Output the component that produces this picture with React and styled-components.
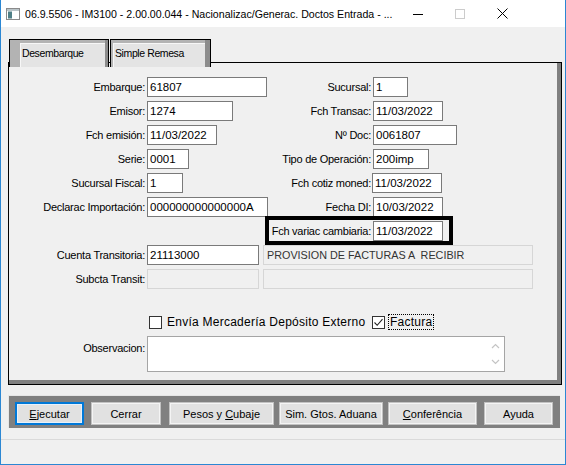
import styled, { createGlobalStyle } from 'styled-components'

const GlobalStyle = createGlobalStyle`
  html, body { margin: 0; padding: 0; background: #fff; }
  body { font-family: "Liberation Sans", Arial, sans-serif; color: #000; }
  * { box-sizing: border-box; }
`

const leftRows = [
  { label: 'Embarque:', value: '61807', w: 120 },
  { label: 'Emisor:', value: '1274', w: 86 },
  { label: 'Fch emisión:', value: '11/03/2022', w: 70 },
  { label: 'Serie:', value: '0001', w: 42 },
  { label: 'Sucursal Fiscal:', value: '1', w: 36 },
  { label: 'Declarac Importación:', value: '000000000000000A', w: 121 },
]

const rightRows = [
  { label: 'Sucursal:', value: '1', w: 35 },
  { label: 'Fch Transac:', value: '11/03/2022', w: 70 },
  { label: 'Nº Doc:', value: '0061807', w: 84 },
  { label: 'Tipo de Operación:', value: '200imp', w: 56 },
  { label: 'Fch cotiz moned:', value: '11/03/2022', w: 70, shift: -1 },
  { label: 'Fecha DI:', value: '10/03/2022', w: 70 },
  { label: 'Fch variac cambiaria:', value: '11/03/2022', w: 70 },
]

const buttons = [
  { text: 'Ejecutar', key: 'E', w: 69, ml: 0, focus: true },
  { text: 'Cerrar', w: 70, ml: 7 },
  { text: 'Pesos y Cubaje', key: 'C', w: 105, ml: 8 },
  { text: 'Sim. Gtos. Aduana', w: 104, ml: 5 },
  { text: 'Conferência', key: 'C', w: 89, ml: 5 },
  { text: 'Ayuda', w: 69, ml: 7 },
]

// underline the access key letter, like a windows caption
const Mnemonic = ({ text, k }) => {
  if (!k) return <span>{text}</span>
  const i = text.indexOf(k)
  return (
    <span>
      {text.slice(0, i)}
      <u>{text[i]}</u>
      {text.slice(i + 1)}
    </span>
  )
}

const App = () => {
  return (
    <>
      <GlobalStyle />
      <Window>
        <TitleBar>
          <svg width="14" height="12" viewBox="0 0 14 12">
            <rect x="0.5" y="0.5" width="13" height="11" fill="#fff" stroke="#8a8a8a" />
            <rect x="1" y="1" width="12" height="2" fill="#b9c4c8" />
            <rect x="2" y="3.5" width="4" height="7" fill="#4f7f86" />
          </svg>
          <Title>06.9.5506 - IM3100 - 2.00.00.044 - Nacionalizac/Generac. Doctos Entrada - ...</Title>
          <Controls>
            <Ctrl>
              <svg width="10" height="10" viewBox="0 0 10 10">
                <line x1="0" y1="5.5" x2="10" y2="5.5" stroke="#000" strokeWidth="1" />
              </svg>
            </Ctrl>
            <Ctrl>
              <svg width="10" height="10" viewBox="0 0 10 10">
                <rect x="0.5" y="0.5" width="9" height="9" fill="none" stroke="#cccccc" />
              </svg>
            </Ctrl>
            <Ctrl>
              <svg width="11" height="11" viewBox="0 0 11 11">
                <path d="M0.5 0.5 L10.5 10.5 M10.5 0.5 L0.5 10.5" stroke="#000" strokeWidth="1" />
              </svg>
            </Ctrl>
          </Controls>
        </TitleBar>

        <Body>
          <TabRow>
            <Tab $w={100} $pl={10} $pr={3}>
              <TabFace>Desembarque</TabFace>
            </Tab>
            <Tab $w={101} $pl={2} $pr={5}>
              <TabFace>Simple Remesa</TabFace>
            </Tab>
          </TabRow>

          <Panel>
            <FormGrid>
              {rightRows.map((r, i) => {
                const l = leftRows[i]
                return [
                  l && <Label key={'ll' + i} $col={1} $row={i + 1}>{l.label}</Label>,
                  l && <Field key={'lf' + i} $col={2} $row={i + 1} $w={l.w}>{l.value}</Field>,
                  <Label key={'rl' + i} $col={3} $row={i + 1}>{r.label}</Label>,
                  <Field key={'rf' + i} $col={4} $row={i + 1} $w={r.w} $shift={r.shift}>{r.value}</Field>,
                ]
              })}

              <Label $col={1} $row={8}>Cuenta Transitoria:</Label>
              <FieldGroup $row={8}>
                <Field $w={112}>21113000</Field>
                <Desc $w={270}>PROVISION DE FACTURAS A  RECIBIR</Desc>
              </FieldGroup>

              <Label $col={1} $row={9}>Subcta Transit:</Label>
              <FieldGroup $row={9}>
                <Desc $w={112} />
                <Desc $w={270} />
              </FieldGroup>

              <CheckItem $col="2 / 4" $row={10} $indent={2}>
                <Box />
                <CheckText>Envía Mercadería Depósito Externo</CheckText>
              </CheckItem>
              <CheckItem $col="4" $row={10} $indent={-1}>
                <Box>
                  <svg width="11" height="11" viewBox="0 0 11 11">
                    <path d="M1.5 5.5 L4.2 8.3 L9.5 2.2" fill="none" stroke="#222" strokeWidth="1.1" />
                  </svg>
                </Box>
                <CheckText $focus>Factura</CheckText>
              </CheckItem>

              <Label $col={1} $row={11} $top>Observacion:</Label>
              <Memo>
                <ScrollCol>
                  <svg width="9" height="6" viewBox="0 0 9 6">
                    <path d="M1 5 L4.5 1.5 L8 5" fill="none" stroke="#c4c4c4" strokeWidth="1.2" />
                  </svg>
                  <svg width="9" height="6" viewBox="0 0 9 6">
                    <path d="M1 1 L4.5 4.5 L8 1" fill="none" stroke="#c4c4c4" strokeWidth="1.2" />
                  </svg>
                </ScrollCol>
              </Memo>
            </FormGrid>
            <Highlight />
          </Panel>

          <ButtonBar>
            {buttons.map((b) => (
              <Btn key={b.text} $w={b.w} $ml={b.ml} $focus={b.focus}>
                <Mnemonic text={b.text} k={b.key} />
              </Btn>
            ))}
          </ButtonBar>

          <StatusBar />
        </Body>
      </Window>
    </>
  )
}

const Window = styled.div`
  width: 566px;
  height: 465px;
  border: 1px solid #2b87d3;
  border-top: none;
  background: #f0f0f0;
  display: flex;
  flex-direction: column;
  overflow: hidden;
`
const TitleBar = styled.div`
  height: 27px;
  flex: none;
  background: #fff;
  display: flex;
  align-items: center;
  padding-left: 5px;
`
const Title = styled.div`
  flex: 1;
  margin-left: 5px;
  font-size: 10.6px;
  white-space: nowrap;
  overflow: hidden;
`
const Controls = styled.div`
  display: flex;
  margin-right: 42px;
`
const Ctrl = styled.div`
  width: 42px;
  height: 27px;
  display: flex;
  align-items: center;
  justify-content: center;
`
const Body = styled.div`
  flex: 1;
  display: flex;
  flex-direction: column;
  padding: 12px 3px 0 7px;
`
const TabRow = styled.div`
  display: flex;
  gap: 1px;
  margin-left: 1px;
  margin-bottom: -5px;
  position: relative;
  z-index: 1;
`
const Tab = styled.div`
  width: ${(p) => p.$w}px;
  height: 28px;
  display: flex;
  border: 1px solid #000;
  border-bottom: none;
  background: #b3b3b3;
  box-shadow: inset -${(p) => p.$pr}px 0 0 #8c8c8c;
  padding: 3px ${(p) => p.$pr}px 0 ${(p) => p.$pl}px;
`
const TabFace = styled.div`
  flex: 1;
  background: #e4e4e4;
  border-top: 1px solid #f7f7f7;
  border-left: 1px solid #f7f7f7;
  font-size: 10.5px;
  letter-spacing: -0.4px;
  padding: 3px 0 0 1px;
  white-space: nowrap;
`
const Panel = styled.div`
  position: relative;
  height: 323px;
  flex: none;
  border: 1px solid #000;
  background: #f0f0f0;
  box-shadow: inset -4px -4px 0 #808080;
  padding-top: 14px;
`
const FormGrid = styled.div`
  display: grid;
  grid-template-columns: 138px 121px 105px 1fr;
  grid-template-rows: repeat(9, 20px) 39px 36px;
  row-gap: 4px;
`
const Label = styled.div`
  grid-column: ${(p) => p.$col};
  grid-row: ${(p) => p.$row};
  font-size: 11px;
  letter-spacing: -0.25px;
  line-height: 20px;
  text-align: right;
  padding-right: 2px;
  padding-top: ${(p) => (p.$top ? '2px' : '0')};
  white-space: nowrap;
  align-self: ${(p) => (p.$top ? 'start' : 'center')};
`
const Field = styled.div`
  grid-column: ${(p) => p.$col};
  grid-row: ${(p) => p.$row};
  width: ${(p) => p.$w}px;
  height: 20px;
  margin-left: ${(p) => p.$shift || 0}px;
  background: #fff;
  border: 1px solid #7a7a7a;
  font-size: 11.5px;
  line-height: 18px;
  padding: 0 2px;
  white-space: nowrap;
  overflow: hidden;
`
const FieldGroup = styled.div`
  grid-column: 2 / 5;
  grid-row: ${(p) => p.$row};
  display: flex;
  gap: 4px;
`
const Desc = styled.div`
  width: ${(p) => p.$w}px;
  height: 20px;
  background: #f0f0f0;
  border: 1px solid #d6d6d6;
  color: #333;
  font-size: 10.8px;
  line-height: 18px;
  padding: 0 3px;
  white-space: pre;
  overflow: hidden;
`
const CheckItem = styled.div`
  grid-column: ${(p) => p.$col};
  grid-row: ${(p) => p.$row};
  align-self: end;
  margin-bottom: 2px;
  margin-left: ${(p) => p.$indent}px;
  display: flex;
  align-items: center;
  gap: 3px;
  white-space: nowrap;
`
const Box = styled.div`
  width: 13px;
  height: 13px;
  background: #fff;
  border: 1px solid #333;
  display: flex;
  align-items: center;
  justify-content: center;
`
const CheckText = styled.span`
  font-size: 12px;
  letter-spacing: 0.25px;
  line-height: 14px;
  padding: 0 1px;
  border: 1px dotted ${(p) => (p.$focus ? '#000' : 'transparent')};
`
const Memo = styled.div`
  grid-column: 2 / 5;
  grid-row: 11;
  width: 358px;
  height: 36px;
  background: #fff;
  border: 1px solid #a5a5a5;
  display: flex;
  justify-content: flex-end;
`
const ScrollCol = styled.div`
  width: 17px;
  display: flex;
  flex-direction: column;
  align-items: center;
  justify-content: space-between;
  padding: 6px 0 6px;
`
const Highlight = styled.div`
  position: absolute;
  left: 256px;
  top: 153px;
  width: 188px;
  height: 29px;
  border: 4px solid #000;
  pointer-events: none;
`
const ButtonBar = styled.div`
  margin-top: 10px;
  margin-right: 2px;
  height: 33px;
  flex: none;
  background: #808080;
  border-top: 1px solid #e6e6e6;
  border-left: 1px solid #e6e6e6;
  padding: 6px 0 3px 6px;
  display: flex;
`
const Btn = styled.div`
  width: ${(p) => p.$w}px;
  height: 23px;
  margin-left: ${(p) => p.$ml}px;
  background: #e1e1e1;
  border: 1px solid ${(p) => (p.$focus ? '#0078d7' : '#c2c2c2')};
  box-shadow: ${(p) =>
    p.$focus ? 'inset 0 0 0 1px #0078d7, inset 0 0 0 2px #e8f1fa' : 'inset 0 0 0 1px #f4f4f4'};
  font-size: 11px;
  display: flex;
  align-items: center;
  justify-content: center;
  white-space: nowrap;
`
const StatusBar = styled.div`
  flex: 1;
  margin: 11px -3px 0 -7px;
  border-top: 1px solid #dadada;
`

export default App
